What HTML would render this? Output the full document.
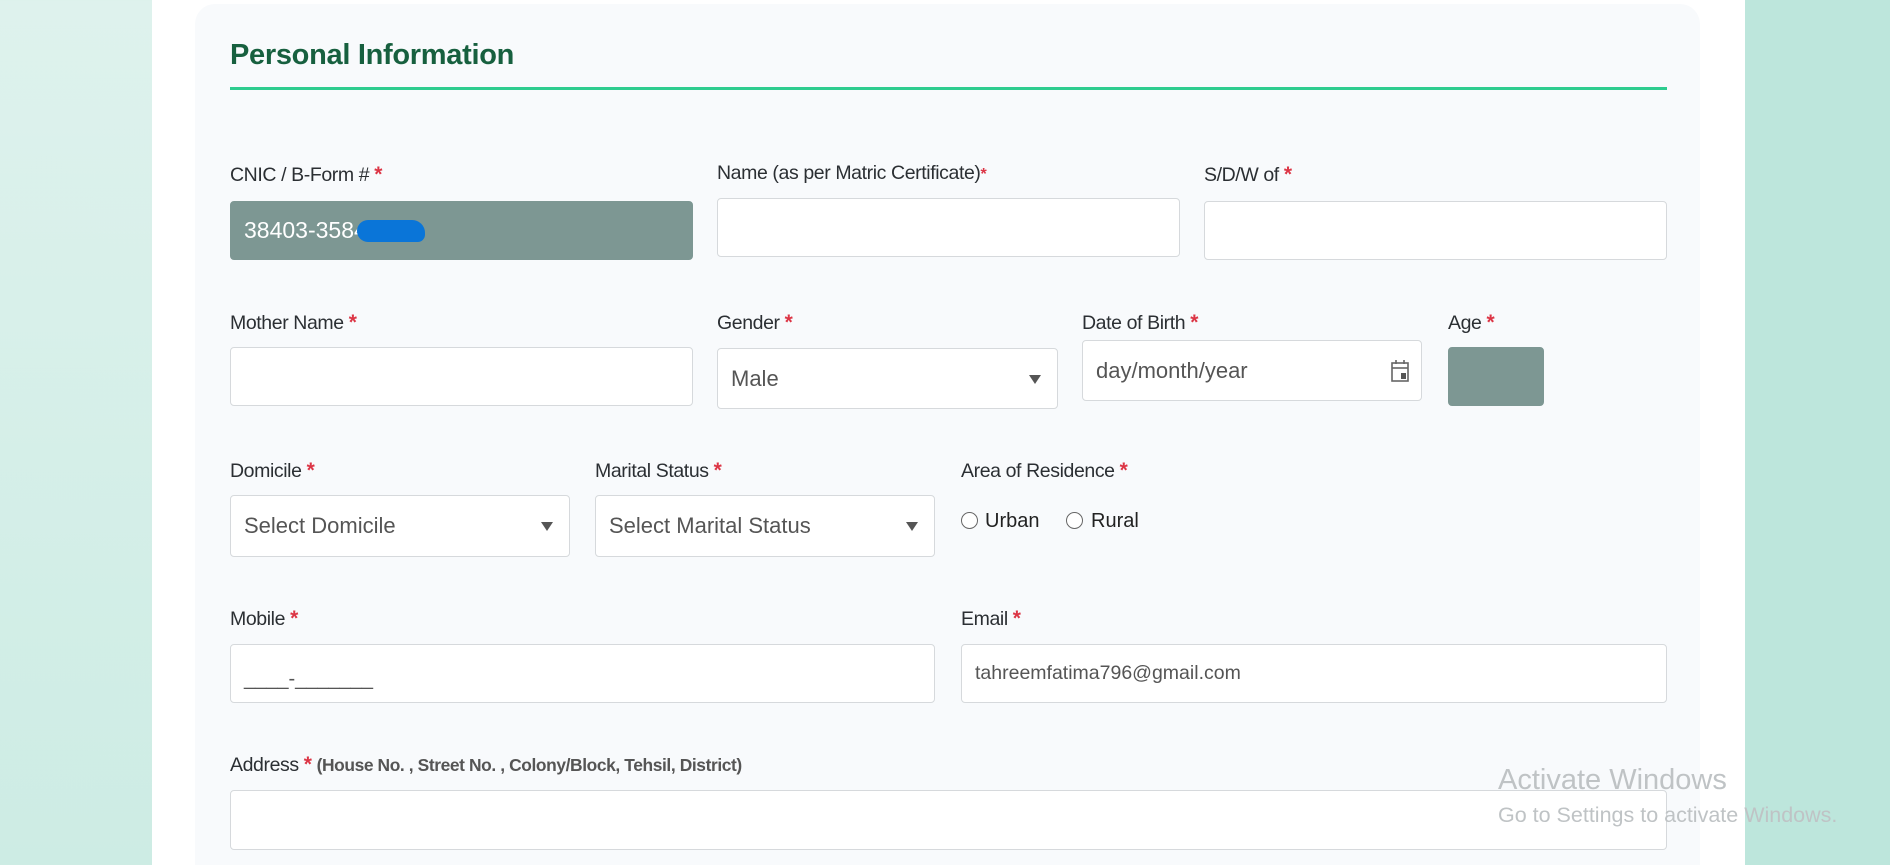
<!DOCTYPE html>
<html><head><meta charset="utf-8"><style>
*{box-sizing:border-box;margin:0;padding:0}
html,body{width:1890px;height:865px;overflow:hidden}
body{background:linear-gradient(180deg,#def2ed,#cdece4);font-family:"Liberation Sans",sans-serif;position:relative}
.rightbg{position:absolute;left:1745px;top:0;width:145px;height:865px;background:#bde6dc}
.page{position:absolute;left:152px;top:0;width:1593px;height:865px;background:#fff}
.card{position:absolute;left:195px;top:4px;width:1505px;height:900px;background:#f8fafc;border-radius:20px}
.abs{position:absolute}
h2{position:absolute;left:230px;top:39px;font-size:29px;font-weight:bold;color:#17603f;letter-spacing:-0.3px}
.line{position:absolute;left:230px;top:87px;width:1437px;height:3px;background:#2ecc8f}
.lbl{position:absolute;font-size:19.5px;color:#2b2f33;letter-spacing:-0.4px}
.lbl b{color:#dc3545;font-size:21px}
.in{position:absolute;background:#fff;border:1px solid #d6d9dc;border-radius:4px;font-size:22px;color:#555;padding-left:13px;display:flex;align-items:center}
.dis{background:#7d9793;border-color:#7d9793;color:#fff}
.arrow{position:absolute;right:16px;top:50%;margin-top:-4px;width:0;height:0;border-left:6px solid transparent;border-right:6px solid transparent;border-top:9px solid #555}
.radio{position:absolute;width:17px;height:17px;border:1.5px solid #666;border-radius:50%;background:#fff}
.rt{position:absolute;font-size:20px;color:#222}
.win{position:absolute;color:#bfc3c5;font-size:29px;left:1498px;top:764px}
.win2{position:absolute;color:#bfc3c5;font-size:21.5px;left:1498px;top:803px}
</style></head><body>
<div class="rightbg"></div>
<div class="page"></div>
<div class="card"></div>
<h2>Personal Information</h2>
<div class="line"></div>

<div class="lbl" style="left:230px;top:163px">CNIC / B-Form # <b>*</b></div>
<div class="in dis" style="left:230px;top:201px;width:463px;height:59px;font-size:23px">38403-3584<span style="display:inline-block;width:68px;height:22px;background:#0a75d8;border-radius:12px 14px 8px 12px;margin-left:-10px"></span></div>
<div class="lbl" style="left:717px;top:162px">Name (as per Matric Certificate)<b style="font-size:16px">*</b></div>
<div class="in" style="left:717px;top:198px;width:463px;height:59px"></div>
<div class="lbl" style="left:1204px;top:163px">S/D/W of <b>*</b></div>
<div class="in" style="left:1204px;top:201px;width:463px;height:59px"></div>

<div class="lbl" style="left:230px;top:311px">Mother Name <b>*</b></div>
<div class="in" style="left:230px;top:347px;width:463px;height:59px"></div>
<div class="lbl" style="left:717px;top:311px">Gender <b>*</b></div>
<div class="in" style="left:717px;top:348px;width:341px;height:61px">Male<div class="arrow"></div></div>
<div class="lbl" style="left:1082px;top:311px">Date of Birth <b>*</b></div>
<div class="in" style="left:1082px;top:340px;width:340px;height:61px">day/month/year
<svg class="abs" style="right:12px;top:18px" width="18" height="24" viewBox="0 0 18 24"><rect x="1" y="4" width="16" height="18" fill="none" stroke="#666" stroke-width="1.6"/><line x1="1" y1="9" x2="17" y2="9" stroke="#666" stroke-width="1.6"/><line x1="5" y1="1" x2="5" y2="5" stroke="#666" stroke-width="1.6"/><line x1="13" y1="1" x2="13" y2="5" stroke="#666" stroke-width="1.6"/><rect x="10" y="14" width="5" height="6" fill="#555"/></svg></div>
<div class="lbl" style="left:1448px;top:311px">Age <b>*</b></div>
<div class="in dis" style="left:1448px;top:347px;width:96px;height:59px"></div>

<div class="lbl" style="left:230px;top:459px">Domicile <b>*</b></div>
<div class="in" style="left:230px;top:495px;width:340px;height:62px">Select Domicile<div class="arrow"></div></div>
<div class="lbl" style="left:595px;top:459px">Marital Status <b>*</b></div>
<div class="in" style="left:595px;top:495px;width:340px;height:62px">Select Marital Status<div class="arrow"></div></div>
<div class="lbl" style="left:961px;top:459px">Area of Residence <b>*</b></div>
<div class="radio" style="left:961px;top:512px"></div><div class="rt" style="left:985px;top:510px">Urban</div>
<div class="radio" style="left:1066px;top:512px"></div><div class="rt" style="left:1091px;top:510px">Rural</div>

<div class="lbl" style="left:230px;top:607px">Mobile <b>*</b></div>
<div class="in" style="left:230px;top:644px;width:705px;height:59px;padding-top:12px;font-size:20px">____-_______</div>
<div class="lbl" style="left:961px;top:607px">Email <b>*</b></div>
<div class="in" style="left:961px;top:644px;width:706px;height:59px;font-size:19.5px">tahreemfatima796@gmail.com</div>

<div class="lbl" style="left:230px;top:753px">Address <b>*</b> <span style="font-size:17.4px;font-weight:bold;color:#555">(House No. , Street No. , Colony/Block, Tehsil, District)</span></div>
<div class="in" style="left:230px;top:790px;width:1437px;height:60px"></div>

<div class="win">Activate Windows</div>
<div class="win2">Go to Settings to activate Windows.</div>
</body></html>
